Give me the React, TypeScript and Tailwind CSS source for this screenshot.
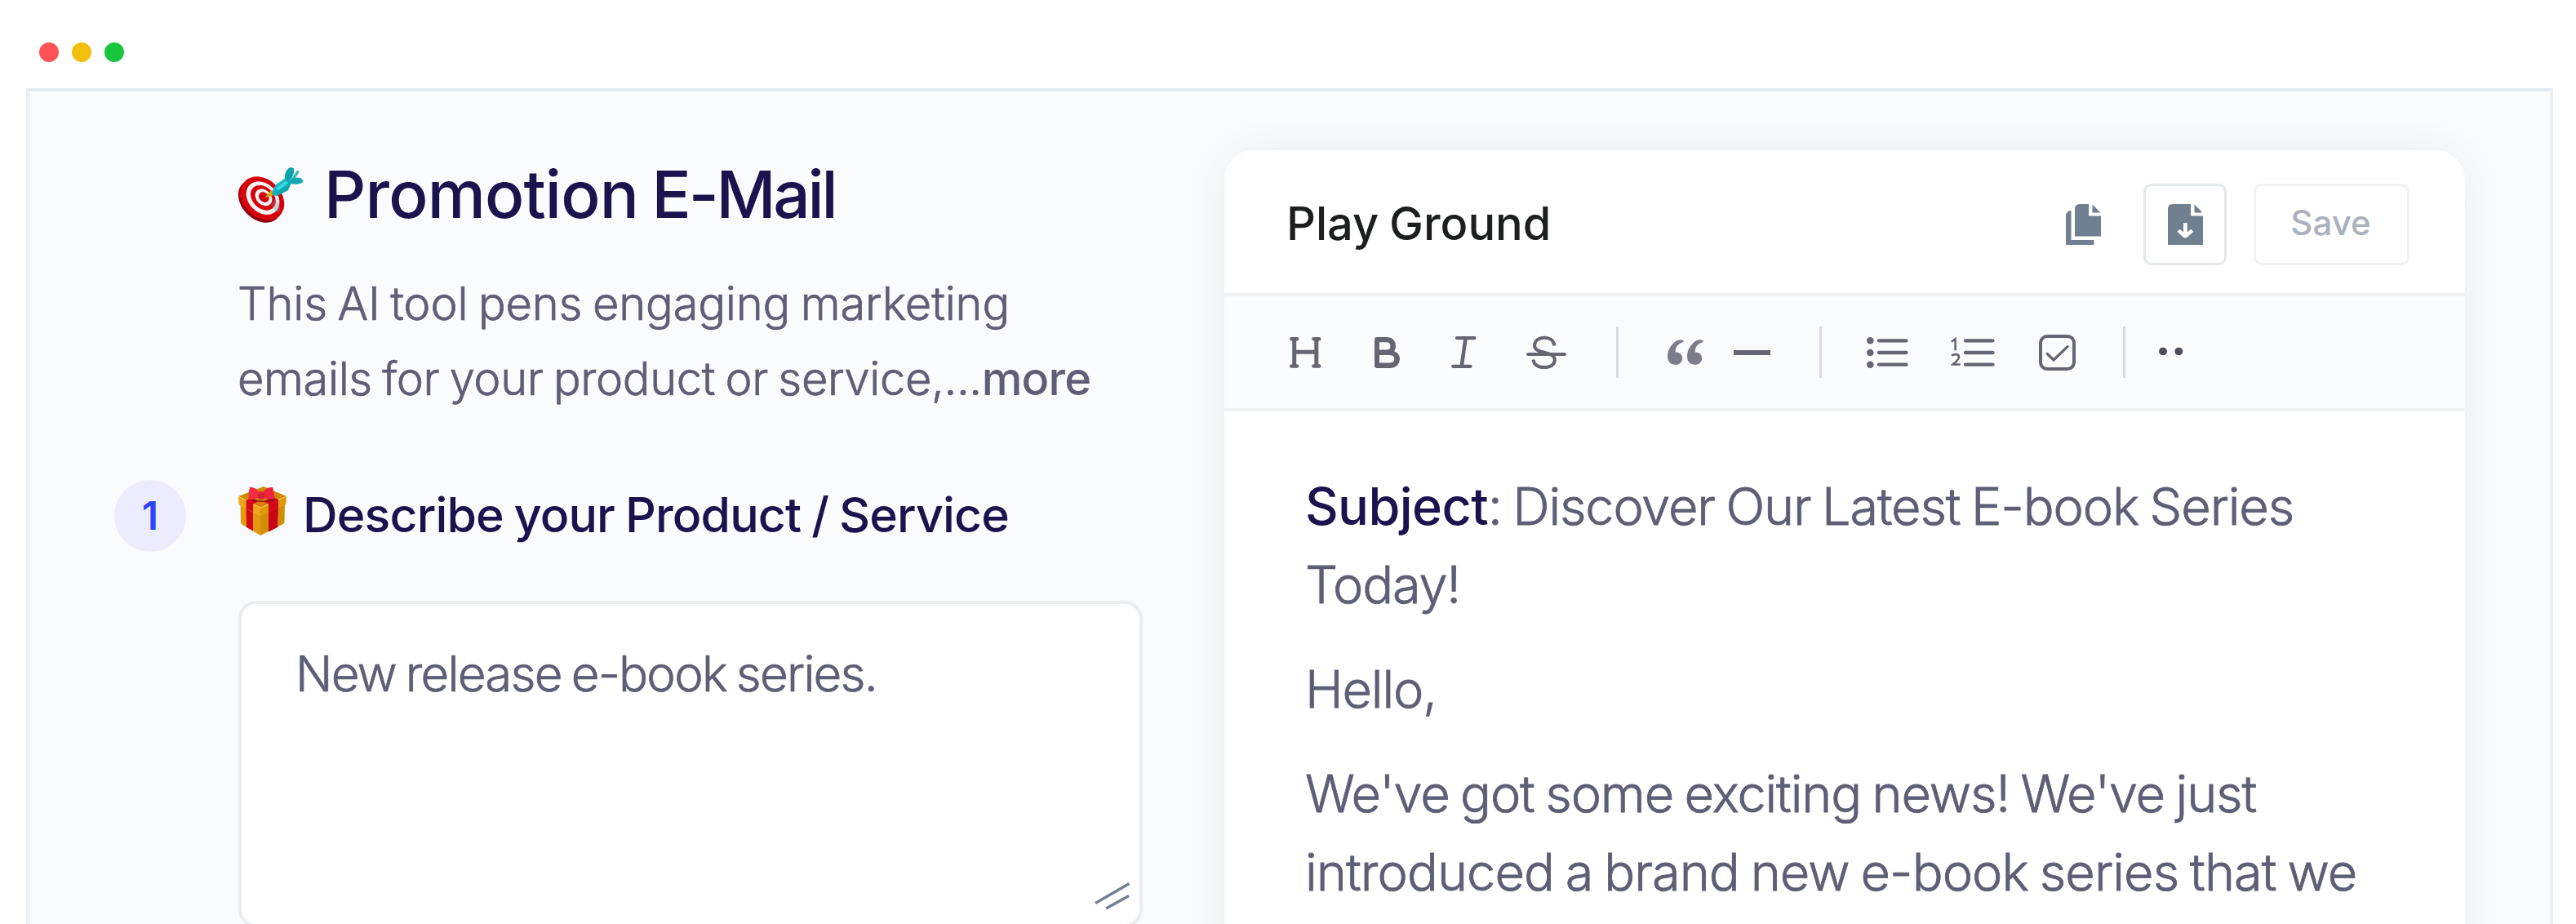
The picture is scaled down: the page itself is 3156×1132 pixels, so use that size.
import type { ReactNode } from "react";

const DartTarget = () => (
  <svg className="h-[68px] w-[79px] shrink-0" viewBox="0 0 79 68">
    <defs>
      <linearGradient id="rim" x1="0" y1="0" x2="1" y2="1">
        <stop offset="0" stopColor="#d3000a" />
        <stop offset="1" stopColor="#7d0010" />
      </linearGradient>
      <linearGradient id="dart" x1="0" y1="0" x2="1" y2="1">
        <stop offset="0" stopColor="#27d3dc" />
        <stop offset="1" stopColor="#028c96" />
      </linearGradient>
    </defs>
    <ellipse cx="26.2" cy="41.5" rx="30" ry="22" transform="rotate(45 26.2 41.5)" fill="url(#rim)" />
    <ellipse cx="29.5" cy="38" rx="30" ry="23" transform="rotate(45 29.5 38)" fill="#d6030c" />
    <ellipse cx="30" cy="37.6" rx="22.8" ry="17.6" transform="rotate(45 30 37.6)" fill="#f7f3f3" />
    <ellipse cx="30.4" cy="37.3" rx="17.4" ry="13" transform="rotate(45 30.4 37.3)" fill="#d6030c" />
    <ellipse cx="31" cy="36.8" rx="11.6" ry="9" transform="rotate(45 31 36.8)" fill="#f7f3f3" />
    <ellipse cx="31.3" cy="36.6" rx="7" ry="5.6" transform="rotate(45 31.3 36.6)" fill="#cf020b" />
    <path d="M45 38q8 8 5 18q-6-2-10-10z" fill="#8d8a95" opacity=".35" />
    <path d="M32 37.500L40 28l7 5z" fill="#e0a700" />
    <path d="M41 30l5-9 12-8 7 6-4 9-13 7-6-1z" fill="url(#dart)" />
    <path d="M57 16q-1-9 4-14.500q4-3 7 0q1 8-5 15z" fill="#0aa5ad" />
    <path d="M63 17l9-13q3 0 2 3l-8 11z" fill="#3db4bd" />
    <path d="M61 18q7-7 15-5q5 3 2 6q-6 3-14 1z" fill="#12a9b1" />
    <path d="M46 26l12-9 3 2-12 9z" fill="#35e0e8" />
  </svg>
);

const Gift = () => (
  <svg className="h-[60px] w-[59px] shrink-0" viewBox="0 0 59 60">
    <path d="M2.500 20L27 34V60L4.500 46.500Q3 45.500 3 44Z" fill="#e39a10" />
    <path d="M57 20L27 34V60L55 46Q56.500 45 56.500 43Z" fill="#d38c08" />
    <path d="M9.500 24L18 29V54.500L10 50Z" fill="#d40918" />
    <path d="M37 29L49 24L48 50L37 55.500Z" fill="#c80415" />
    <path d="M0 12L27 26V36.500L2 23Q.5 22 .5 20Z" fill="#eda71b" />
    <path d="M59 12L27 26V36.500L57 23Q58.500 22 58.500 20Z" fill="#dd980c" />
    <path d="M0 12L31 0L59 12L27 26Z" fill="#d18905" />
    <path d="M16 20L28 15L40 20L27 26Z" fill="#e07a12" />
    <path d="M0 12L27 26L59 12" fill="none" stroke="#f7c95a" strokeWidth="1" />
    <path d="M9.500 17L16 14L24 18.500L18 21.500V31.500L9.500 27Z" fill="#d90b1b" />
    <path d="M31 18.500L41 13L49 16V27L37 32V21.500Z" fill="#d40918" />
    <path d="M14 14Q30 21 47 14L43 18Q29 20 16 18Z" fill="#7a0a12" opacity=".75" />
    <path d="M27 8Q20 0 14 .8Q12 8 12.500 16Q19 17 27 12.500Z" fill="#f42c45" />
    <path d="M29 8Q35 0 42 1Q44 8 45 15Q38 17.500 29 12.500Z" fill="#ee233d" />
    <rect x="24" y="6.500" width="8" height="9.500" rx="3.500" fill="#dd1f35" />
  </svg>
);

const PAGE_FOLD = "M32.500 .5L42.500 10.500H32.500Z";

const CopyIcon = () => (
  <svg className="h-[50px] w-[43px]" viewBox="0 0 43 50" fill="#708090">
    <path d="M17 0H28V14.500H43V39.500H11V6Q11 0 17 0Z" />
    <path d={PAGE_FOLD} />
    <path d="M6.500 8V44H34.500V50H0V14.500Q0 8.500 6.500 8Z" />
  </svg>
);

const DownloadIcon = () => (
  <svg className="h-[50px] w-[43px]" viewBox="0 0 43 50" fill="#708090">
    <path d="M6 0H28V14.500H43V50H0V6Q0 0 6 0Z" />
    <path d={PAGE_FOLD} />
    <path
      d="M19 23h4.700v11.500l4.500-3.800 3.200 3-7.200 6.600q-2.900 2.400-5.800 0l-7-6.600 3.200-3 4.400 3.800z"
      fill="#fff"
    />
  </svg>
);

const HeadingIcon = () => (
  <svg className="h-[38px] w-[39px]" viewBox="0 0 39 38" fill="none" stroke="#656673" strokeLinecap="round">
    <path d="M2.300 2.300H9M29.500 2.300H36.200M2.300 35.500H9M29.500 35.500H36.200" strokeWidth="4.500" />
    <path d="M5.700 3V35M32.800 3V35M6 18.200H32.500" strokeWidth="5" strokeLinecap="butt" />
  </svg>
);

const BoldIcon = () => (
  <svg className="h-[38px] w-[31px]" viewBox="0 0 31 38" fill="#656673">
    <path
      fillRule="evenodd"
      d="M3 0H15.500Q26 1 26 11Q26 15 24 17.300Q31 20 31 27Q30.500 37 19.500 38H3Q0 38 0 35V3Q0 0 3 0ZM6 6.300V15.500H14.500Q19.500 15.500 19.500 11Q19.500 6.300 14.500 6.300ZM6 22V31.500H18Q24.300 31.500 24.300 26.700Q24.300 22 18 22Z"
    />
  </svg>
);

const ItalicIcon = () => (
  <svg className="h-[39px] w-[31px]" viewBox="0 0 31 39" fill="none" stroke="#656673" strokeLinecap="round">
    <path d="M7 2.200H28.300M2.200 36.800H23.500" strokeWidth="4.200" />
    <path d="M17.500 3L12.800 36" strokeWidth="4.600" />
  </svg>
);

const StrikeIcon = () => (
  <svg className="h-[42px] w-[49px]" viewBox="0 0 49 42" fill="none" stroke="#656673" strokeWidth="4">
    <path d="M2 23H47" strokeLinecap="round" />
    <path d="M34.500 12.500C33.500 6 28.500 2.700 22.300 2.700C14.500 2.700 10 7 10 12.300C10 17.500 14.500 18.800 21 20.500C29 22.500 34.800 24 34.800 30C34.800 35.500 29.500 39 22.300 39C14 39 9 35.500 8.500 29.500" />
  </svg>
);

const QUOTE_MARK =
  "M19.300 1.200C17 -.4 12 .2 8 3.700C2.800 8.200 0 14.500 0 20.500C0 27 3.500 30.800 9.500 30.800C14.800 30.800 18.200 27.300 18.200 23C18.200 18.300 14.500 15.200 9.600 15.500C9.500 9.500 12.800 5 18.800 3.200Q20.300 2.400 19.300 1.200Z";

const QuoteIcon = () => (
  <svg className="h-[31px] w-[44px]" viewBox="0 0 44 31" fill="#7b7e8a">
    <path d={QUOTE_MARK} />
    <path d={QUOTE_MARK} transform="translate(24 0)" />
  </svg>
);

const BulletListIcon = () => (
  <svg className="h-[38px] w-[51px]" viewBox="0 0 51 38" fill="#656673" stroke="#656673">
    <g stroke="none">
      <circle cx="4.300" cy="4.300" r="4.300" />
      <circle cx="4.300" cy="19" r="4.300" />
      <circle cx="4.300" cy="33.700" r="4.300" />
    </g>
    <path d="M15 4.300H48.500M15 19H48.500M15 33.700H48.500" strokeWidth="4.300" strokeLinecap="round" />
  </svg>
);

const NumberedListIcon = () => (
  <svg className="h-[38px] w-[54px]" viewBox="0 0 54 38" fill="none" stroke="#656673">
    <path d="M18 4.300H51.500M18 19H51.500M18 33.700H51.500" strokeWidth="4.300" strokeLinecap="round" />
    <path d="M.8 5.800L5.600 2.200V16.300" strokeWidth="2.600" />
    <path d="M1.200 22.800C3.500 20.600 10 20 10 24.500C10 27.500 6.500 30 2.500 33.500H11.800" strokeWidth="2.600" />
  </svg>
);

const CheckIcon = () => (
  <svg className="h-[44px] w-[45px]" viewBox="0 0 45 44" fill="none" stroke="#656673" strokeLinecap="round" strokeLinejoin="round">
    <rect x="2" y="2" width="41" height="40" rx="8" strokeWidth="4" />
    <path d="M10.300 23.500L18 31L35 14.700" strokeWidth="3.200" />
  </svg>
);

const MoreDots = () => (
  <svg className="h-[10px] w-[30px] -translate-y-[1.500px]" viewBox="0 0 30 10" fill="#4b5059">
    <circle cx="5" cy="5" r="4.900" />
    <circle cx="24.300" cy="5" r="4.900" />
  </svg>
);

const Divider = ({ className }: { className: string }) => (
  <span className={`h-[63px] w-[3px] bg-[#d8dae7] ${className}`} />
);

const Tool = ({ label, className, children }: { label: string; className?: string; children: ReactNode }) => (
  <button aria-label={label} className={`flex shrink-0 items-center ${className ?? ""}`}>
    {children}
  </button>
);

const PromptForm = () => (
  <section className="w-[1260px] shrink-0 pt-[77px]">
    <header className="pl-[152px]">
      <div className="flex h-[100px] items-center">
        <DartTarget />
        <h1 className="ml-[26px] -translate-y-[1px] text-[80px] font-medium leading-[100px] tracking-[-0.800px] [word-spacing:-4px] whitespace-nowrap text-[#1b124e]">
          Promotion <span className="tracking-[-3.200px]">E-Mail</span>
        </h1>
      </div>
      <p className="-ml-[1px] mt-[37px] text-[56px] font-light leading-[92px] tracking-[-0.150px] [word-spacing:-3px] whitespace-nowrap text-[#5e5f76] [-webkit-text-stroke:0.700px]">
        This AI tool pens engaging marketing
        <br />
        <span className="tracking-[-0.380px]">emails for your product or service,...</span>
        <span className="font-medium tracking-[-0.900px] [-webkit-text-stroke:0]">more</span>
      </p>
    </header>

    <div className="mt-[78px] flex h-[88px] items-center">
      <span className="flex size-[88px] items-center justify-center rounded-full bg-[#ebecfe] text-[48px] font-semibold leading-none text-[#2f43f5]">
        1
      </span>
      <span className="ml-[64px] -translate-y-[6px]">
        <Gift />
      </span>
      <h2 className="ml-[20px] -translate-y-[1px] text-[59px] font-medium leading-[88px] tracking-[-0.850px] [word-spacing:-2px] whitespace-nowrap text-[#1b124e]">
        Describe your Product / Service
      </h2>
    </div>

    <div className="relative mt-[60px] ml-[152px] h-[400px] rounded-[22px] border-4 border-[#ebecee] bg-white pt-[43px] pl-[66px]">
      <p className="text-[60px] font-light leading-[84px] tracking-[-1.800px] [word-spacing:-3px] whitespace-nowrap text-[#5e5f76] [-webkit-text-stroke:0.700px]">
        New release e-book series.
      </p>
      <svg
        className="absolute right-[11px] bottom-[18px] h-[34px] w-[44px]"
        viewBox="0 0 44 34"
        stroke="#758193"
        strokeWidth="3.600"
      >
        <path d="M1 26.500L42.500 2.500M14 33L42 17.500" />
      </svg>
    </div>
  </section>
);

const PlayGround = () => (
  <section className="ml-[100px] mt-[72px] h-[1100px] w-[1520px] shrink-0 rounded-t-[36px] bg-white shadow-[0_0_60px_rgba(60,60,40,0.065)]">
    <header className="flex h-[179px] items-center border-b-4 border-[#eff1f3] pr-[68px] pl-[76px]">
      <h2 className="translate-y-[2px] text-[56px] font-medium leading-[80px] [word-spacing:-2px] text-[#1d1f1f]">
        Play Ground
      </h2>
      <button aria-label="Copy" className="ml-auto translate-y-[3px]">
        <CopyIcon />
      </button>
      <button
        aria-label="Download"
        className="ml-[52px] flex h-[100px] w-[102px] translate-y-[3px] items-center justify-center rounded-[10px] border-[3px] border-[#e4e8eb]"
      >
        <DownloadIcon />
      </button>
      <button className="ml-[33px] h-[100px] w-[191px] translate-y-[3px] rounded-[10px] border-[3px] border-[#eff1f2] pr-[2px] pb-[4px] text-[42px] font-medium text-[#abb2bc]">
        Save
      </button>
    </header>

    <div className="flex h-[141px] items-center border-b-4 border-[#f0f2f4] bg-[#f9fbfd] pl-[80px]">
      <Tool label="Heading"><HeadingIcon /></Tool>
      <Tool label="Bold" className="ml-[65px]"><BoldIcon /></Tool>
      <Tool label="Italic" className="ml-[63px]"><ItalicIcon /></Tool>
      <Tool label="Strikethrough" className="ml-[61px]"><StrikeIcon /></Tool>
      <Divider className="ml-[61px]" />
      <Tool label="Quote" className="ml-[60px]"><QuoteIcon /></Tool>
      <Tool label="Rule" className="ml-[37px]"><span className="h-[6px] w-[45px] bg-[#656673]" /></Tool>
      <Divider className="ml-[60px]" />
      <Tool label="Bullet list" className="ml-[55px]"><BulletListIcon /></Tool>
      <Tool label="Numbered list" className="ml-[52px]"><NumberedListIcon /></Tool>
      <Tool label="Task list" className="ml-[54px]"><CheckIcon /></Tool>
      <Divider className="ml-[58px]" />
      <Tool label="More" className="ml-[41px]"><MoreDots /></Tool>
    </div>

    <article className="space-y-[32px] pt-[68px] pl-[99px] text-[63px] font-light leading-[96px] tracking-[-1.150px] [word-spacing:-3px] whitespace-nowrap text-[#5e5f76] [-webkit-text-stroke:0.800px]">
      <p>
        <span className="font-medium tracking-[-0.600px] text-[#1b124e] [-webkit-text-stroke:0]">Subject</span>: Discover Our Latest E-book Series
        <br />
        Today!
      </p>
      <p>Hello,</p>
      <p>
        We've got some exciting news! We've just
        <br />
        <span className="tracking-[-0.920px]">introduced a brand new e-book series that we</span>
      </p>
    </article>
  </section>
);

export default function App() {
  return (
    <div className="flex h-[1132px] w-[3156px] flex-col overflow-hidden bg-white font-['Inter',sans-serif]">
      <div className="flex h-[108px] shrink-0 items-center gap-4 pt-[20px] pl-[48px]">
        <span className="size-6 rounded-full bg-[#ff5355]" />
        <span className="size-6 rounded-full bg-[#f2bf0c]" />
        <span className="size-6 rounded-full bg-[#18c53c]" />
      </div>
      <main className="ml-[32px] flex h-[1100px] w-[3096px] shrink-0 overflow-hidden border-4 border-[#ebeef1] border-t-[#e4eaf2] bg-[#fafbfd] pl-[104px]">
        <PromptForm />
        <PlayGround />
      </main>
    </div>
  );
}
